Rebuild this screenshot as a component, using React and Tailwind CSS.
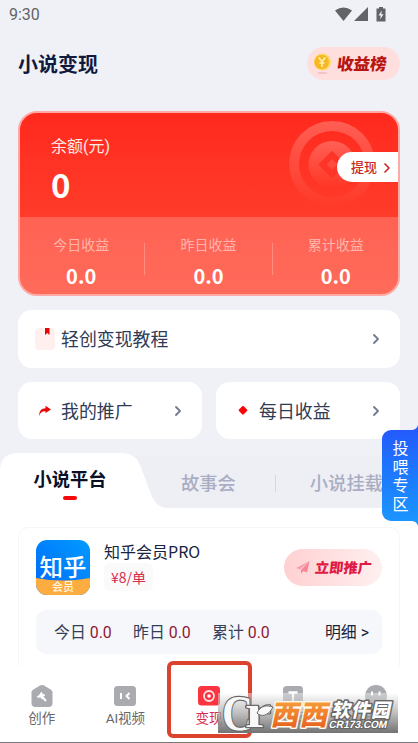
import { useState } from 'react';
import { ChevronRight } from 'lucide-react';

const earnings = [
  { label: '今日收益', value: '0.0' },
  { label: '昨日收益', value: '0.0' },
  { label: '累计收益', value: '0.0' },
];

const stats = [
  { label: '今日', value: '0.0' },
  { label: '昨日', value: '0.0' },
  { label: '累计', value: '0.0' },
];

const StatusBar = () => (
  <div className="h-[30px] shrink-0 flex items-center justify-between pl-[9px] pr-[32px] text-[#626367]">
    <span className="text-[16px] leading-5">9:30</span>
    <svg width="51" height="16" viewBox="0 0 51 16" fill="#626367">
      <path d="M0 3.5Q8.500 -2.500 17 3.500L8.500 14Z" />
      <path d="M33 0V14H19Z" />
      <path d="M44 0H48V1.500H50.500V14.500H41.500V1.500H44Z" />
      <path d="M46.800 3.500L43.500 8.500H45.700L45.200 12.500L48.500 7.300H46.300Z" fill="#f0f1f7" />
    </svg>
  </div>
);

const CoinIcon = () => (
  <svg width="19" height="22" viewBox="0 0 19 22">
    <ellipse cx="9.500" cy="20" rx="5" ry="1" fill="#f0c4c2" />
    <circle cx="9.500" cy="9" r="8.500" fill="#fbdc6a" />
    <circle cx="8.700" cy="9" r="7.300" fill="#f8b823" />
    <path d="M5.700 4.500L9 8.500L12.300 4.500M9 8.500V14M6.500 10H11.500" stroke="#fff0b0" strokeWidth="1.600" fill="none" />
  </svg>
);

const BalanceCard = () => (
  <section className="relative mx-[18px] mt-[31px] h-[185px] shrink-0 rounded-[19px] border-2 border-[#ffa9a5] bg-linear-to-b from-[#ff291d] to-[#ff4631] overflow-hidden flex flex-col">
    <svg className="absolute left-[269px] top-[8px]" width="86" height="86" viewBox="0 0 86 86">
      <defs>
        <linearGradient id="ring" x1="0" y1="0" x2="0" y2="1">
          <stop offset="0" stopColor="#fff" stopOpacity="0.240" />
          <stop offset="1" stopColor="#fff" stopOpacity="0" />
        </linearGradient>
      </defs>
      <path fillRule="evenodd" fill="url(#ring)" d="M43 0A43 43 0 1 1 43 86A43 43 0 1 1 43 0ZM43 10A33 33 0 1 0 43 76A33 33 0 1 0 43 10Z" />
      <circle cx="43" cy="43.500" r="23.500" fill="url(#ring)" />
      <path d="M43 34L52.500 43.500L43 53L33.500 43.500Z" fill="none" stroke="#ff3428" strokeWidth="6" />
    </svg>
    <div className="h-[104px] pl-[31px] pt-[22px] relative">
      <p className="text-[16px] leading-6 text-[#ffe9e7]">余额(元)</p>
      <p className="mt-[5px] text-[33px] leading-[40px] font-bold text-white font-['Noto_Sans_CJK_SC',sans-serif]">0</p>
      <button className="absolute right-0 top-[39px] h-[30px] w-[61px] rounded-l-full bg-white flex items-center pl-[14px] pt-px text-[13px] font-medium text-[#c52b24]">
        提现
        <ChevronRight size={16} strokeWidth={2.600} className="ml-[2px] shrink-0" />
      </button>
    </div>
    <div className="flex-1 bg-white/20 grid grid-cols-3 -mx-[2px]">
      {earnings.map((item, i) => (
        <div key={item.label} className="relative flex flex-col items-center pt-[18px] pr-px">
          <span className="text-[14px] leading-5 text-[#ffb5ab]">{item.label}</span>
          <span className="mt-[9px] text-[20px] leading-6 font-bold text-white font-['Noto_Sans_CJK_SC',sans-serif]">{item.value}</span>
          {i < 2 && <span className="absolute right-0 top-[26px] h-[32px] w-px bg-white/25" />}
        </div>
      ))}
    </div>
  </section>
);

const GuideIcon = () => (
  <svg width="20" height="22" viewBox="0 0 20 22">
    <rect width="20" height="22" rx="4" fill="#fff0ef" />
    <path d="M10 0H14.500V7L12.250 5L10 7Z" fill="#e60505" />
  </svg>
);

const ShareIcon = () => (
  <svg width="20" height="22" viewBox="0 0 20 22">
    <path d="M4.200 16C4 10.500 7 8.300 10.500 8.200V5.800L16 9.600L10.500 13V11.300C7.500 11 5 12.500 4.200 16Z" fill="#ea0606" />
  </svg>
);

const DiamondIcon = () => (
  <svg width="20" height="22" viewBox="0 0 20 22">
    <path d="M9.200 6.300Q10 5.500 10.800 6.300L14 9.500Q14.800 10.300 14 11.100L10.800 14.300Q10 15.100 9.200 14.300L6 11.100Q5.200 10.300 6 9.500Z" fill="#fa0505" />
  </svg>
);

const MenuCard = ({ icon: Icon, label, className = '' }) => (
  <a className={`flex items-center rounded-[14px] bg-white pl-[17px] pr-[16px] ${className}`}>
    <Icon />
    <span className="ml-[6px] mt-[2px] flex-1 text-[17.900px] leading-6 text-[#2f3a55]">{label}</span>
    <ChevronRight size={16} strokeWidth={2.800} className="text-[#737c8f]" />
  </a>
);

const Tabs = () => {
  const [active, setActive] = useState(0);
  return (
    <div className="relative mt-[14px] h-[55px] shrink-0 flex overflow-hidden">
      <svg className="absolute inset-0" width="418" height="55" viewBox="0 0 418 55">
        <rect y="3" width="418" height="52" fill="#eeeff4" />
        <path d="M0 0V18Q0 0 18 0Z" fill="#f0f1f7" />
        <path d="M0 55V18Q0 0 18 0H123Q135 0 140 12L151 41Q156 55 168 55Z" fill="#fff" />
      </svg>
      <button onClick={() => setActive(0)} className="relative w-[140px] flex flex-col items-center pt-[15px] text-[18.300px] leading-6 font-bold text-[#0a1028]">
        小说平台
        {active === 0 && <span className="mt-[4px] h-[4px] w-[14px] rounded-full bg-[#f70909]" />}
      </button>
      <button onClick={() => setActive(1)} className="relative ml-[41px] mt-[19px] h-6 text-[18.300px] leading-6 font-medium text-[#a9adc3] whitespace-nowrap">
        故事会
      </button>
      <span className="relative ml-[39px] mt-[22px] h-[17px] w-px bg-[#d5d8e1]" />
      <button onClick={() => setActive(2)} className="relative ml-[34px] mt-[19px] h-6 text-[18.300px] leading-6 font-medium text-[#a9adc3] whitespace-nowrap">
        小说挂载
      </button>
    </div>
  );
};

const PlatformLogo = () => (
  <div className="relative w-[54px] h-[55px] rounded-[11px] overflow-hidden bg-linear-to-tr from-[#0065f8] to-[#009bff] flex flex-col items-center">
    <svg className="absolute left-0 bottom-0" width="54" height="17" viewBox="0 0 54 17">
      <path d="M0 0Q27 5 54 0V17H0Z" fill="#fdac40" />
    </svg>
    <span className="relative mt-[15px] text-[23.500px] leading-[26px] font-medium text-white">知乎</span>
    <span className="relative text-[11px] leading-[13px] font-medium text-[#fff6df]">会员</span>
  </div>
);

const PlaneIcon = () => (
  <svg width="14" height="13" viewBox="0 0 14 13">
    <path d="M13.500 0L0 7L4 8.500Z" fill="#fa9fac" />
    <path d="M13.500 0L5 9V12.500L7.500 10L11 11.500Z" fill="#f58597" />
  </svg>
);

const PlatformCard = () => (
  <article className="mx-[18px] mt-[19px] h-[140px] shrink-0 rounded-t-[10px] rounded-b-[3px] border border-b-0 border-[#f6f6f8] px-[17px] pt-[12px]">
    <div className="flex">
      <PlatformLogo />
      <div className="ml-[14px] flex-1">
        <h3 className="-mt-px text-[16px] leading-6 text-[#17233f] font-['Noto_Sans_CJK_SC',sans-serif]">知乎会员PRO</h3>
        <span className="flex h-[28px] w-[49px] items-center justify-center rounded-[6px] bg-[#fafafb] text-[14px] text-[#d92b4d] font-['Noto_Sans_CJK_SC',sans-serif]">¥8/单</span>
      </div>
      <button className="mt-[9px] h-[37px] w-[98px] rounded-full bg-linear-to-r from-[#ffd0d2] to-[#fff0f0] flex items-center pl-[12px]">
        <PlaneIcon />
        <span className="ml-[5px] mt-[2px] inline-block -skew-x-6 text-[14.200px] font-black text-[#df1a44] whitespace-nowrap">立即推广</span>
      </button>
    </div>
    <div className="mt-[15px] h-[44px] rounded-[10px] bg-[#f6f7fa] flex items-center pl-[18px] pr-[13px] pt-px text-[15.900px] text-[#333f59]">
      {stats.map((item) => (
        <span key={item.label} className="w-[79px] whitespace-nowrap">
          {item.label} <span className="text-[#911936]">{item.value}</span>
        </span>
      ))}
      <a className="ml-auto text-[#17233f] whitespace-nowrap">明细 &gt;</a>
    </div>
  </article>
);

const CreateIcon = () => (
  <svg width="22" height="24" viewBox="0 0 22 24">
    <path d="M9.500 1.300Q11 0.500 12.500 1.300L20 5.800Q21.500 6.800 21.500 8.300V19Q21.500 23 17.500 23H4.500Q0.500 23 0.500 19V8.300Q0.500 6.800 2 5.800Z" fill="#a9abb0" />
    <path d="M10.500 8L11.300 10.300L14 11L11.800 12.500L11.500 15.200L9.500 13.300L6 13L8.300 11.300Z" fill="#fff" stroke="#fff" strokeWidth="0.800" />
    <path d="M11 12.500L15 17" stroke="#fff" strokeWidth="2" />
  </svg>
);

const VideoIcon = () => (
  <svg width="22" height="24" viewBox="0 0 22 24">
    <rect y="2" width="22" height="20" rx="3.500" fill="#a9abb0" />
    <path d="M7 9V15M15.500 9L12.500 12L15.500 15" stroke="#fff" strokeWidth="2" fill="none" />
  </svg>
);

const MoneyIcon = () => (
  <svg width="22" height="24" viewBox="0 0 22 24">
    <rect y="2" width="22" height="19.500" rx="3.500" fill="#fb3540" />
    <circle cx="11" cy="12" r="5" fill="none" stroke="#ffe4e6" strokeWidth="1.800" />
    <circle cx="11" cy="12" r="1.800" fill="#fff" />
  </svg>
);

const TextIcon = () => (
  <svg width="20" height="24" viewBox="0 0 20 24">
    <rect y="2" width="20" height="21" rx="3.500" fill="#a9abb0" />
    <path d="M5.500 8.500H14.500M10 8.500V17" stroke="#fff" strokeWidth="2.300" />
  </svg>
);

const MineIcon = () => (
  <svg width="22" height="24" viewBox="0 0 22 24">
    <circle cx="11" cy="12" r="11" fill="#a9abb0" />
    <path d="M7 7.500V11.500M14.500 7.500V11.500" stroke="#fff" strokeWidth="2" />
  </svg>
);

const navItems = [
  { label: '创作', icon: CreateIcon },
  { label: 'AI视频', icon: VideoIcon },
  { label: '变现', icon: MoneyIcon, active: true },
  { label: '文案', icon: TextIcon },
  { label: '我的', icon: MineIcon },
];

const BottomNav = () => (
  <nav className="h-[76px] shrink-0 grid grid-cols-5 border-b border-[#77787c] bg-white">
    {navItems.map(({ label, icon: Icon, active }) => (
      <a key={label} className={`flex flex-col items-center pt-[17px] text-[13.500px] leading-5 ${active ? 'text-[#d92c4f]' : 'text-[#66686d]'}`}>
        <Icon />
        <span>{label}</span>
      </a>
    ))}
  </nav>
);

// Floating entry on the right edge
const FeedTab = () => (
  <div className="absolute right-0 top-[425px] flex flex-col items-end">
    <svg width="6" height="5" viewBox="0 0 6 5" className="block"><path d="M6 0V5H0Q5 4.500 6 0Z" fill="#2459fb" /></svg>
    <div className="h-[91px] w-[36px] rounded-l-[9px] bg-linear-to-b from-[#245afc] to-[#1c95ff] flex flex-col items-center justify-center pt-[3px] pl-px text-[16px] leading-[18.500px] text-white">
      <span>投</span>
      <span>喂</span>
      <span>专</span>
      <span>区</span>
    </div>
    <svg width="6" height="5" viewBox="0 0 6 5" className="block"><path d="M6 5V0H0Q5 0.500 6 5Z" fill="#1c95ff" /></svg>
  </div>
);

const Watermark = () => (
  <div className="absolute left-[218px] top-[693px] h-[40px] w-[180px] bg-linear-to-b from-[#ffffff66] via-[#a6a6a6b8] to-[#737373]">
    <svg className="absolute left-[5px] top-0" width="180" height="40" viewBox="0 0 180 40" overflow="visible">
      <defs>
        <linearGradient id="orange" x1="0" y1="0" x2="0" y2="1">
          <stop offset="0" stopColor="#fcb040" />
          <stop offset="1" stopColor="#e4571c" />
        </linearGradient>
      </defs>
      <g fontFamily="Liberation Serif" fontWeight="700" fill="#f8f8f8" stroke="#696969" strokeWidth="2.400" paintOrder="stroke" strokeLinejoin="round">
        <text x="-1" y="37" fontSize="51" textLength="31" lengthAdjust="spacingAndGlyphs">C</text>
        <text x="22" y="34" fontSize="46" textLength="26" lengthAdjust="spacingAndGlyphs">r</text>
      </g>
      <g transform="skewX(-12)" fontFamily="Noto Sans CJK SC" fontWeight="900" paintOrder="stroke" strokeLinejoin="round">
        <text x="54" y="32" fontSize="28" textLength="57" fill="url(#orange)" stroke="#fff8ec" strokeWidth="3">西西</text>
        <text x="113" y="24" fontSize="19" textLength="59" fill="#fff" stroke="#666" strokeWidth="3">软件园</text>
        <text x="113" y="35" fontSize="10.500" textLength="58" lengthAdjust="spacingAndGlyphs" fontWeight="700" fontFamily="Liberation Sans" fill="#fff" stroke="#666" strokeWidth="2.500">CR173.COM</text>
      </g>
      {/* leaf on the end of the r */}
      <path d="M34 20C38 12 44 12 50 14C47 20 41 25 35 21Z" fill="#f8f8f8" stroke="#696969" strokeWidth="1" />
    </svg>
  </div>
);

const App = () => {
  return (
    <div className="relative h-[743px] w-[418px] overflow-hidden bg-[#f0f1f7] flex flex-col font-[Roboto,'Noto_Sans_CJK_SC',sans-serif]">
      <StatusBar />

      <header className="mt-[17px] h-[33px] shrink-0 flex items-center justify-between px-[18px]">
        <h1 className="mt-[2px] text-[20px] leading-7 font-bold text-[#101a3d]">小说变现</h1>
        <div className="h-[33px] w-[93px] rounded-full bg-[#ffdede] flex items-center pl-[6px]">
          <CoinIcon />
          <span className="ml-[5px] mt-[3px] inline-block -skew-x-6 text-[16.500px] font-black text-[#b81412] whitespace-nowrap">收益榜</span>
        </div>
      </header>

      <BalanceCard />

      <div className="mx-[18px] mt-[14px] shrink-0 grid grid-cols-2 gap-[14px]">
        <MenuCard icon={GuideIcon} label="轻创变现教程" className="col-span-2 h-[58px]" />
        <MenuCard icon={ShareIcon} label="我的推广" className="h-[57px]" />
        <MenuCard icon={DiamondIcon} label="每日收益" className="h-[57px]" />
      </div>

      <Tabs />

      <main className="flex-1 min-h-0 overflow-hidden bg-white">
        <div className="flex flex-col">
          <PlatformCard />
        </div>
      </main>

      <BottomNav />

      <FeedTab />
      <div className="absolute left-[167px] top-[661px] h-[77px] w-[85px] rounded-[6px] border-4 border-[#dc432f]" />
      <Watermark />
    </div>
  );
};

export default App;
